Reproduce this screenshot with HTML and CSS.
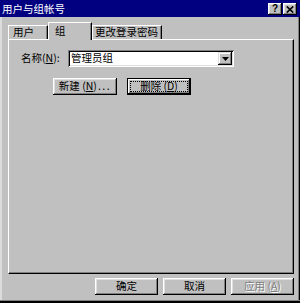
FILE: index.html
```html
<!DOCTYPE html>
<html>
<head>
<meta charset="utf-8">
<link rel="stylesheet" href="styles.css">
</head>
<body>
<div class="window">
  <div class="titlebar">
    <span class="title">用户与组帐号</span>
    <div class="tb-buttons">
      <span class="tb-btn help">?</span>
      <span class="tb-btn close"><svg width="8" height="7" viewBox="0 0 8 7"><path d="M0.8 0.5L7.2 6.5M7.2 0.5L0.8 6.5" stroke="#000" stroke-width="1.7"/></svg></span>
    </div>
  </div>
  <div class="body">
    <div class="tabs">
      <div class="tab tab-user">用户</div>
      <div class="tab tab-group active">组</div>
      <div class="tab tab-pass">更改登录密码</div>
    </div>
    <div class="panel">
      <div class="name-row">
        <span class="label">名称(<u>N</u>):</span>
        <div class="combo">
          <span class="combo-text">管理员组</span>
          <span class="combo-btn"><svg width="7" height="4" viewBox="0 0 7 4"><polygon points="0,0 7,0 3.5,4" fill="#000"/></svg></span>
        </div>
      </div>
      <div class="btn-row">
        <button class="btn">新建 (<u>N</u>)<span class="dots">...</span></button>
        <button class="btn default"><span class="focus">删除 (<u>D</u>)</span></button>
      </div>
    </div>
    <div class="actions">
      <button class="btn wide">确定</button>
      <button class="btn wide">取消</button>
      <button class="btn wide disabled">应用 (<u>A</u>)</button>
    </div>
  </div>
</div>
</body>
</html>
```
FILE: styles.css
```css
body {
  margin: 0;
  background: #c0c0c0;
  font-family: "Noto Sans CJK SC", "Noto Sans", sans-serif;
  font-size: 10.5px;
  line-height: 1;
  color: #000;
}

.window {
  width: 300px;
  height: 303px;
  box-sizing: border-box;
  display: flex;
  flex-direction: column;
  background: #c0c0c0;
  box-shadow: inset 0 -2px #000, inset 0 -3px #808080, inset -1px 0 #000, inset -2px 0 #808080, inset 2px 0 #dcdcdc;
}

.titlebar {
  flex: none;
  height: 17px;
  box-sizing: border-box;
  background: #000080;
  display: flex;
  align-items: flex-start;
  padding: 0 3px 0 2px;
}

.title {
  color: #fff;
  line-height: 17px;
}

.tb-buttons {
  margin-left: auto;
  display: flex;
  gap: 1px;
  padding-top: 3px;
}

.tb-btn {
  width: 14px;
  height: 12px;
  box-sizing: border-box;
  background: #c0c0c0;
  box-shadow: inset -1px -1px #000, inset 1px 1px #fff, inset -2px -2px #808080, inset 2px 2px #dfdfdf;
  display: flex;
  align-items: center;
  justify-content: center;
}

.help {
  font-family: "Liberation Sans", sans-serif;
  font-weight: bold;
  font-size: 10px;
  padding-bottom: 1px;
}

.body {
  flex: 1;
  display: flex;
  flex-direction: column;
  padding: 0 6px 0 8px;
}

.tabs {
  height: 22px;
  display: flex;
  align-items: flex-end;
}

.tab {
  height: 14px;
  box-sizing: border-box;
  border-top: 1px solid #fff;
  border-left: 1px solid #fff;
  border-right: 1px solid #000;
  box-shadow: inset -1px 0 #808080;
  background: #c0c0c0;
  display: flex;
  align-items: center;
  white-space: nowrap;
}

.tab-user {
  width: 40px;
  padding-left: 4px;
}

.tab-group {
  width: 44px;
  padding-left: 6px;
}

.tab-pass {
  width: 70px;
  padding-left: 2px;
}

.tab.active {
  height: 18px;
  margin-bottom: -1px;
  padding-bottom: 1px;
  position: relative;
  z-index: 1;
}

.panel {
  height: 235px;
  box-sizing: border-box;
  border-top: 1px solid #fff;
  border-left: 1px solid #fff;
  border-right: 1px solid #000;
  border-bottom: 1px solid #000;
  box-shadow: inset -1px -1px #808080;
  padding: 10px 0 0 12px;
}

.name-row {
  display: flex;
  align-items: center;
  height: 17px;
}

.label {
  width: 47px;
  white-space: nowrap;
}

.combo {
  width: 166px;
  height: 17px;
  box-sizing: border-box;
  padding: 2px;
  display: flex;
  background: #fff;
  box-shadow: inset 1px 1px #808080, inset -1px -1px #fff, inset 2px 2px #000, inset -2px -2px #dfdfdf;
}

.combo-text {
  flex: 1;
  padding-left: 1px;
  display: flex;
  align-items: center;
}

.combo-btn {
  width: 14px;
  height: 13px;
  box-sizing: border-box;
  background: #c0c0c0;
  box-shadow: inset -1px -1px #000, inset 1px 1px #dfdfdf, inset -2px -2px #808080, inset 2px 2px #fff;
  display: flex;
  align-items: center;
  justify-content: center;
}

.btn-row {
  display: flex;
  gap: 10px;
  margin-top: 11px;
  padding-left: 32px;
}

.btn {
  width: 64px;
  height: 17px;
  box-sizing: border-box;
  border: 0;
  padding: 0;
  margin: 0;
  font: inherit;
  color: #000;
  background: #c0c0c0;
  box-shadow: inset -1px -1px #000, inset 1px 1px #fff, inset -2px -2px #808080, inset 2px 2px #dfdfdf;
  display: flex;
  align-items: center;
  justify-content: center;
  white-space: nowrap;
}

.btn.default {
  box-shadow: inset 0 0 0 1px #000, inset -2px -2px #000, inset 2px 2px #fff, inset -3px -3px #808080;
  align-items: stretch;
  padding: 3px;
}

.focus {
  flex: 1;
  border: 1px dotted #000;
  display: flex;
  align-items: center;
  justify-content: center;
}

.dots {
  letter-spacing: 1.5px;
  margin-left: 1px;
}

.actions {
  display: flex;
  justify-content: flex-end;
  gap: 5px;
  margin-top: 4px;
}

.btn.wide {
  width: 63px;
}

.btn.disabled {
  color: #808080;
  text-shadow: 1px 1px #fff;
}
```
